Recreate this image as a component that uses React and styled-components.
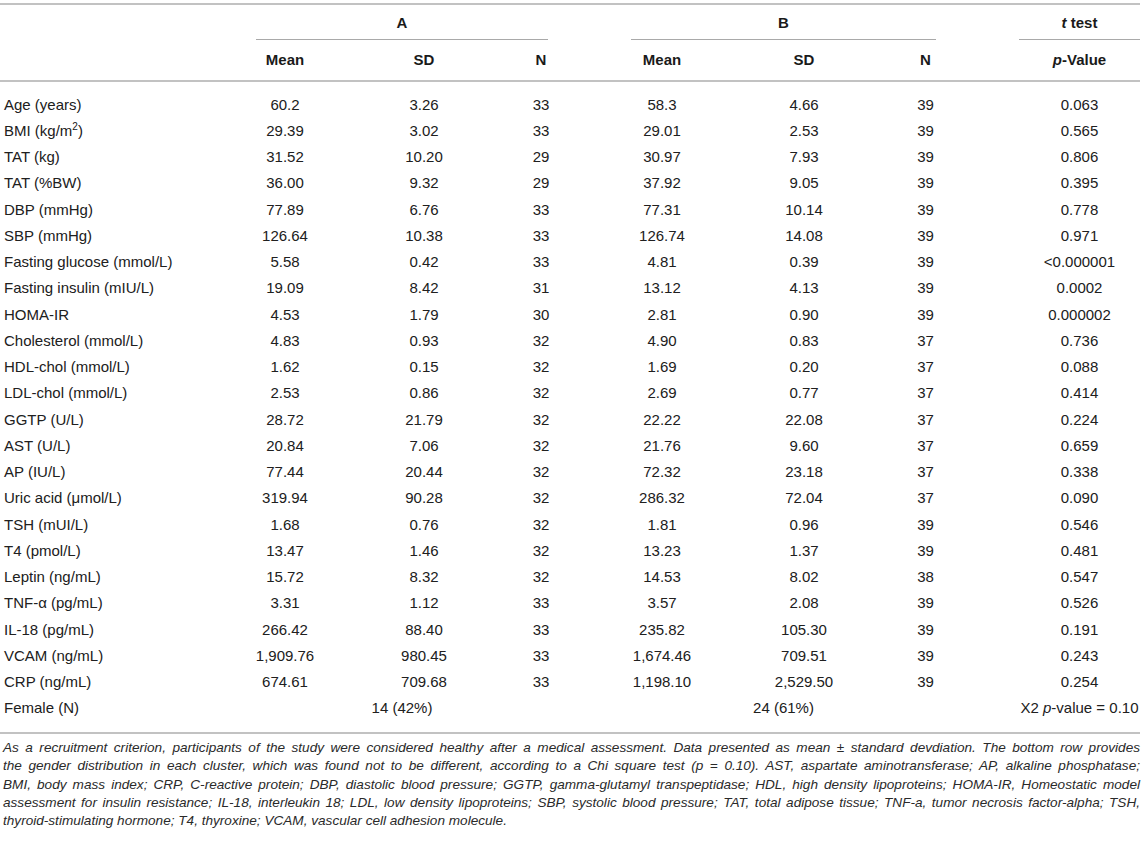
import React from "react";
import styled, { createGlobalStyle } from "styled-components";

const GlobalStyle = createGlobalStyle`
  html, body { margin: 0; padding: 0; background: #ffffff; }
  body {
    font-family: "Liberation Sans", Arial, Helvetica, sans-serif;
    color: #202020;
  }
`;

const COLUMNS = "250px 70px 208px 26px 71px 74px 210px 33px 77px 121px";

const Page = styled.div`
  width: 1140px;
  padding-top: 3px;
`;

const Table = styled.div`
  border-top: 2px solid #c2c2c2;
  border-bottom: 2px solid #c2c2c2;
`;

const Head = styled.div`
  border-bottom: 2px solid #c2c2c2;
`;

const Row = styled.div`
  display: grid;
  grid-template-columns: ${COLUMNS};
  align-items: center;
`;

const GroupCell = styled.div`
  grid-column: ${(p) => p.$col};
  margin: ${(p) => p.$inset || "0 6px"};
  padding: 9px 0 8px;
  line-height: 17px;
  font-size: 15px;
  font-weight: 700;
  text-align: center;
  color: #1a1a1a;
  border-bottom: 1px solid #a9a9a9;
`;

const SubHeadRow = styled(Row)`
  padding: 11px 0 12px;
`;

const HeadCell = styled.div`
  grid-column: ${(p) => p.$col};
  font-size: 15px;
  line-height: 17px;
  font-weight: 700;
  text-align: center;
  color: #1a1a1a;
`;

const Body = styled.div`
  padding: 9px 0 11px;
`;

const BodyRow = styled(Row)`
  font-size: 15px;
  line-height: 17px;
`;

const Label = styled.div`
  grid-column: 1;
  padding: 4.625px 4px;
  white-space: nowrap;
`;

const Value = styled.div`
  grid-column: ${(p) => p.$col};
  padding: 4.625px 0;
  text-align: center;
  white-space: nowrap;
`;

const Footnote = styled.div`
  margin: 5px 0 0;
  padding-left: 3px;
  width: 1137px;
  font-size: 13.6px;
  line-height: 18.3px;
  font-style: italic;
  color: #2a2a2a;
`;

const FootLine = styled.span`
  display: block;
  white-space: nowrap;
  text-align: left;
  text-align-last: ${(p) => (p.$last ? "left" : "justify")};
`;

const rows = [
  ["Age (years)", "60.2", "3.26", "33", "58.3", "4.66", "39", "0.063"],
  [<>BMI (kg/m<sup style={{ fontSize: "10px", lineHeight: 0 }}>2</sup>)</>, "29.39", "3.02", "33", "29.01", "2.53", "39", "0.565"],
  ["TAT (kg)", "31.52", "10.20", "29", "30.97", "7.93", "39", "0.806"],
  ["TAT (%BW)", "36.00", "9.32", "29", "37.92", "9.05", "39", "0.395"],
  ["DBP (mmHg)", "77.89", "6.76", "33", "77.31", "10.14", "39", "0.778"],
  ["SBP (mmHg)", "126.64", "10.38", "33", "126.74", "14.08", "39", "0.971"],
  ["Fasting glucose (mmol/L)", "5.58", "0.42", "33", "4.81", "0.39", "39", "<0.000001"],
  ["Fasting insulin (mIU/L)", "19.09", "8.42", "31", "13.12", "4.13", "39", "0.0002"],
  ["HOMA-IR", "4.53", "1.79", "30", "2.81", "0.90", "39", "0.000002"],
  ["Cholesterol (mmol/L)", "4.83", "0.93", "32", "4.90", "0.83", "37", "0.736"],
  ["HDL-chol (mmol/L)", "1.62", "0.15", "32", "1.69", "0.20", "37", "0.088"],
  ["LDL-chol (mmol/L)", "2.53", "0.86", "32", "2.69", "0.77", "37", "0.414"],
  ["GGTP (U/L)", "28.72", "21.79", "32", "22.22", "22.08", "37", "0.224"],
  ["AST (U/L)", "20.84", "7.06", "32", "21.76", "9.60", "37", "0.659"],
  ["AP (IU/L)", "77.44", "20.44", "32", "72.32", "23.18", "37", "0.338"],
  ["Uric acid (\u03bcmol/L)", "319.94", "90.28", "32", "286.32", "72.04", "37", "0.090"],
  ["TSH (mUI/L)", "1.68", "0.76", "32", "1.81", "0.96", "39", "0.546"],
  ["T4 (pmol/L)", "13.47", "1.46", "32", "13.23", "1.37", "39", "0.481"],
  ["Leptin (ng/mL)", "15.72", "8.32", "32", "14.53", "8.02", "38", "0.547"],
  ["TNF-\u03b1 (pg/mL)", "3.31", "1.12", "33", "3.57", "2.08", "39", "0.526"],
  ["IL-18 (pg/mL)", "266.42", "88.40", "33", "235.82", "105.30", "39", "0.191"],
  ["VCAM (ng/mL)", "1,909.76", "980.45", "33", "1,674.46", "709.51", "39", "0.243"],
  ["CRP (ng/mL)", "674.61", "709.68", "33", "1,198.10", "2,529.50", "39", "0.254"],
];

const valueCols = [2, 3, 4, 6, 7, 8, 10];

const footLines = [
  "As a recruitment criterion, participants of the study were considered healthy after a medical assessment. Data presented as mean \u00b1 standard devdiation. The bottom row provides",
  "the gender distribution in each cluster, which was found not to be different, according to a Chi square test (p = 0.10). AST, aspartate aminotransferase; AP, alkaline phosphatase;",
  "BMI, body mass index; CRP, C-reactive protein; DBP, diastolic blood pressure; GGTP, gamma-glutamyl transpeptidase; HDL, high density lipoproteins; HOMA-IR, Homeostatic model",
  "assessment for insulin resistance; IL-18, interleukin 18; LDL, low density lipoproteins; SBP, systolic blood pressure; TAT, total adipose tissue; TNF-a, tumor necrosis factor-alpha; TSH,",
  "thyroid-stimulating hormone; T4, thyroxine; VCAM, vascular cell adhesion molecule.",
];

export default function App() {
  return (
    <Page>
      <GlobalStyle />
      <Table>
        <Head>
          <Row>
            <GroupCell $col="2 / 5">A</GroupCell>
            <GroupCell $col="6 / 9">B</GroupCell>
            <GroupCell $col="10 / 11" $inset="0">
              <i>t</i> test
            </GroupCell>
          </Row>
          <SubHeadRow>
            <HeadCell $col="2">Mean</HeadCell>
            <HeadCell $col="3">SD</HeadCell>
            <HeadCell $col="4">N</HeadCell>
            <HeadCell $col="6">Mean</HeadCell>
            <HeadCell $col="7">SD</HeadCell>
            <HeadCell $col="8">N</HeadCell>
            <HeadCell $col="10">
              <i>p</i>-Value
            </HeadCell>
          </SubHeadRow>
        </Head>
        <Body>
          {rows.map((r, i) => (
            <BodyRow key={i}>
              <Label>{r[0]}</Label>
              {r.slice(1).map((v, j) => (
                <Value key={j} $col={valueCols[j]}>
                  {v}
                </Value>
              ))}
            </BodyRow>
          ))}
          <BodyRow>
            <Label>Female (N)</Label>
            <Value $col="2 / 5">14 (42%)</Value>
            <Value $col="6 / 9">24 (61%)</Value>
            <Value $col="10 / 11">
              X2 <i>p</i>-value = 0.10
            </Value>
          </BodyRow>
        </Body>
      </Table>
      <Footnote>
        {footLines.map((line, i) => (
          <FootLine key={i} $last={i === footLines.length - 1}>
            {line}
          </FootLine>
        ))}
      </Footnote>
    </Page>
  );
}
